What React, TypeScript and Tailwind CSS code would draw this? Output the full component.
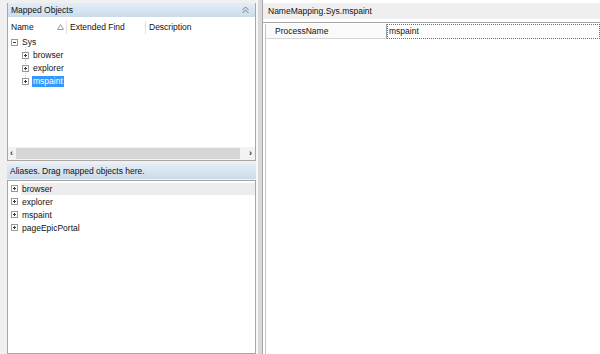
import type { ReactNode } from 'react';

const font = "font-['Liberation_Sans',Arial,sans-serif]";

function PlusBox({ minus = false }: { minus?: boolean }) {
    return (
        <span className="relative inline-flex items-center justify-center w-[7px] h-[7px] border border-[#9a9a9a] bg-white shrink-0">
            <span className="absolute w-[3px] h-px bg-[#3a3a3a]" />
            {!minus && <span className="absolute w-px h-[3px] bg-[#3a3a3a]" />}
        </span>
    );
}

function TreeRow({ indent, children, minus, selected }: { indent: number; children: ReactNode; minus?: boolean; selected?: boolean }) {
    return (
        <div className="flex items-center h-[13px]" style={{ paddingLeft: indent }}>
            <PlusBox minus={minus} />
            <span className={`ml-[3px] px-px leading-[11px] ${selected ? 'bg-[#3399ff] text-white' : ''}`}>{children}</span>
        </div>
    );
}

function DoubleChevron() {
    return (
        <svg width="9" height="8" viewBox="0 0 9 8" fill="none" stroke="#7a7a7a" strokeWidth="1">
            <path d="M1.5 4 L4.5 1 L7.5 4" />
            <path d="M1.5 7 L4.5 4 L7.5 7" />
        </svg>
    );
}

export default function App() {
    const aliases = ['browser', 'explorer', 'mspaint', 'pageEpicPortal'];

    return (
        <div className={`w-[600px] h-[354px] overflow-hidden bg-[#f0f0f0] flex text-[8.5px] text-[#111] ${font}`}>
            {/* Left column */}
            <div className="flex flex-col w-[256px] pl-[7px] pt-[3px] shrink-0">
                {/* Mapped objects */}
                <div className="flex flex-col h-[158px] border-x border-b border-[#a7a7a7] bg-white">
                    <div className="flex items-center justify-between h-[14px] px-[3px] bg-gradient-to-b from-[#e4edf6] to-[#cbdbeb]">
                        <span>Mapped Objects</span>
                        <span className="mr-[2px]"><DoubleChevron /></span>
                    </div>
                    <div className="flex items-center h-[16px] mt-[2px]">
                        <div className="flex items-center justify-between w-[59px] pl-[3px] pr-[2px] border-r border-[#e2e2e2] h-[13px]">
                            <span>Name</span>
                            <svg width="7" height="6" viewBox="0 0 7 6" fill="none" stroke="#9a9a9a"><path d="M3.5 0.5 L6.5 5.5 L0.5 5.5 Z" /></svg>
                        </div>
                        <div className="w-[79px] pl-[3px] border-r border-[#e2e2e2] h-[13px] flex items-center">Extended Find</div>
                        <div className="pl-[3px] h-[13px] flex items-center">Description</div>
                    </div>
                    <div className="relative flex-1 pt-px">
                        <TreeRow indent={3} minus>Sys</TreeRow>
                        <div className="absolute left-[17px] top-[12px] h-[39px] border-l border-dotted border-[#c8c8c8]" />
                        <TreeRow indent={14}>browser</TreeRow>
                        <TreeRow indent={14}>explorer</TreeRow>
                        <TreeRow indent={14} selected>mspaint</TreeRow>
                    </div>
                    <div className="flex items-center h-[13px] bg-[#f3f3f3]">
                        <span className="w-[7px] text-center text-[9px] font-bold text-[#333] leading-none">‹</span>
                        <div className="ml-[1px] w-[224px] h-[11px] bg-[#d6d6d6]" />
                        <div className="flex-1" />
                        <span className="w-[9px] text-center text-[9px] font-bold text-[#333] leading-none">›</span>
                    </div>
                </div>

                {/* Aliases */}
                <div className="flex items-center h-[15px] mt-[3px] px-[3px] bg-gradient-to-b from-[#e4edf6] to-[#cbdbeb]">
                    Aliases. Drag mapped objects here.
                </div>
                <div className="flex-1 mt-[1px] border border-[#a7a7a7] bg-white pt-px">
                    {aliases.map((a, i) => (
                        <div key={a} className="flex items-center h-[13px] pl-[3px]">
                            <PlusBox />
                            <span className={`ml-[3px] flex-1 pl-px leading-[12px] ${i === 0 ? 'bg-[#ededed]' : ''}`}>{a}</span>
                        </div>
                    ))}
                </div>
            </div>

            {/* Splitter */}
            <div className="w-[6px] shrink-0 flex">
                <div className="w-[2px] bg-[#f7f7f7]" />
                <div className="w-[4px] bg-[#d9d9d9]" />
            </div>

            {/* Right column */}
            <div className="flex-1 flex flex-col pt-[3px] border-l border-[#a7a7a7] bg-white">
                <div className="h-[16px] flex items-center pl-[5px] bg-[#efefef]">NameMapping.Sys.mspaint</div>
                <div className="mt-[3px] flex-1 border-t border-[#a7a7a7] pl-[2px] pt-[1px]">
                    <div className="h-full border-l border-[#c4c4c4]">
                        <div className="flex h-[15px]">
                            <div className="w-[121px] flex items-center pl-[9px] bg-[#fafafa] border-b border-[#d6d6d6] border-r border-r-[#a0a0a0]">ProcessName</div>
                            <div className="flex-1 flex items-center pl-[1px] border border-dotted border-[#6f6f6f]">mspaint</div>
                        </div>
                    </div>
                </div>
            </div>
        </div>
    );
}
